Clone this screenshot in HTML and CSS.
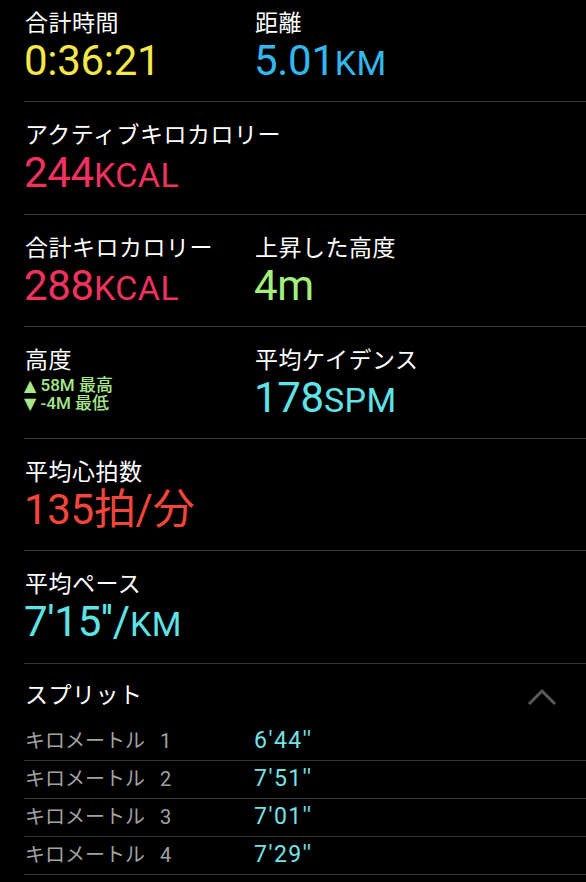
FILE: index.html
```html
<!DOCTYPE html>
<html lang="ja">
<head>
    <meta charset="UTF-8">
    <meta name="viewport" content="width=device-width, initial-scale=1.0">
    <title>ワークアウト</title>
    <link rel="stylesheet" href="styles.css">
</head>
<body>
    <div class="screen">
        <section class="stats">
            <div class="row first">
                <div class="cell">
                    <div class="label">合計時間</div>
                    <div class="value yellow">0:36:21</div>
                </div>
                <div class="cell">
                    <div class="label">距離</div>
                    <div class="value blue">5.01<span class="unit">KM</span></div>
                </div>
            </div>
            <div class="row">
                <div class="cell wide">
                    <div class="label">アクティブキロカロリー</div>
                    <div class="value pink">244<span class="unit">KCAL</span></div>
                </div>
            </div>
            <div class="row">
                <div class="cell">
                    <div class="label">合計キロカロリー</div>
                    <div class="value pink">288<span class="unit">KCAL</span></div>
                </div>
                <div class="cell">
                    <div class="label">上昇した高度</div>
                    <div class="value green">4m</div>
                </div>
            </div>
            <div class="row">
                <div class="cell">
                    <div class="label">高度</div>
                    <div class="elev">
                        <div class="elev-line"><span class="tri">▲</span> 58M 最高</div>
                        <div class="elev-line"><span class="tri">▼</span> -4M 最低</div>
                    </div>
                </div>
                <div class="cell">
                    <div class="label">平均ケイデンス</div>
                    <div class="value cyan">178<span class="unit">SPM</span></div>
                </div>
            </div>
            <div class="row">
                <div class="cell wide">
                    <div class="label">平均心拍数</div>
                    <div class="value red">135拍/分</div>
                </div>
            </div>
            <div class="row">
                <div class="cell wide">
                    <div class="label">平均ペース</div>
                    <div class="value cyan">7'15''/<span class="unit">KM</span></div>
                </div>
            </div>
        </section>

        <section class="splits">
            <div class="splits-head">
                <span>スプリット</span>
                <svg class="chevron" width="30" height="18" viewBox="0 0 30 18">
                    <polyline points="2,16 15,3 28,16" fill="none" stroke="#5a5a5a" stroke-width="3"/>
                </svg>
            </div>
            <div class="split">
                <span class="split-name">キロメートル 1</span>
                <span class="split-time">6'44''</span>
            </div>
            <div class="split">
                <span class="split-name">キロメートル 2</span>
                <span class="split-time">7'51''</span>
            </div>
            <div class="split">
                <span class="split-name">キロメートル 3</span>
                <span class="split-time">7'01''</span>
            </div>
            <div class="split">
                <span class="split-name">キロメートル 4</span>
                <span class="split-time">7'29''</span>
            </div>
        </section>
    </div>
</body>
</html>
```

FILE: styles.css
```css
html, body {
    margin: 0;
    padding: 0;
    background-color: #000;
}
body {
    font-family: Roboto, "Noto Sans CJK JP", sans-serif;
    color: #fff;
    overflow: hidden;
    height: 882px;
}
.screen {
    margin-left: 24px;
}
.row {
    display: grid;
    grid-template-columns: 230px 1fr;
    height: 76.3px;
    padding: 17px 0 18px;
    border-bottom: 1px solid #363636;
}
.row.first {
    margin-top: -10px;
}
.cell.wide {
    grid-column: 1 / 3;
}
.label {
    font-family: "Noto Sans CJK JP", sans-serif;
    font-size: 23px;
    line-height: 28px;
    height: 28px;
    padding-left: 1px;
    letter-spacing: 0.5px;
}
.value {
    margin-top: 4px;
    height: 44px;
    font-size: 42px;
    line-height: 44px;
    font-weight: 400;
    letter-spacing: -0.3px;
    white-space: nowrap;
}
.unit {
    font-size: 34px;
    letter-spacing: 0.5px;
}
.yellow { color: #f4e84b; }
.blue { color: #32b8ee; }
.pink { color: #f1325f; }
.green { color: #a3ef7d; }
.cyan { color: #5ee3e6; }
.red { color: #f4463a; }
.elev {
    margin-top: 4px;
    font-size: 17px;
    font-weight: 500;
    color: #a6e88a;
    white-space: nowrap;
}
.elev-line {
    height: 18px;
    line-height: 18px;
    overflow: hidden;
}
.tri {
    font-family: "DejaVu Sans", sans-serif;
    font-size: 16px;
}
.splits-head {
    display: flex;
    justify-content: space-between;
    align-items: flex-start;
    height: 28px;
    padding: 15px 29px 16px 1px;
    font-family: "Noto Sans CJK JP", sans-serif;
    font-size: 23px;
    line-height: 28px;
    letter-spacing: 0.5px;
}
.chevron {
    margin-top: 9px;
}
.split {
    display: grid;
    grid-template-columns: 229px 1fr;
    align-items: baseline;
    height: 24px;
    padding: 6px 0 7px 1px;
    line-height: 24px;
    border-bottom: 1px solid #363636;
}
.split-name {
    font-size: 20px;
    word-spacing: 10px;
    color: #a2a2a2;
}
.split-time {
    font-size: 23px;
    letter-spacing: 1.5px;
    color: #76e2e4;
}
```
